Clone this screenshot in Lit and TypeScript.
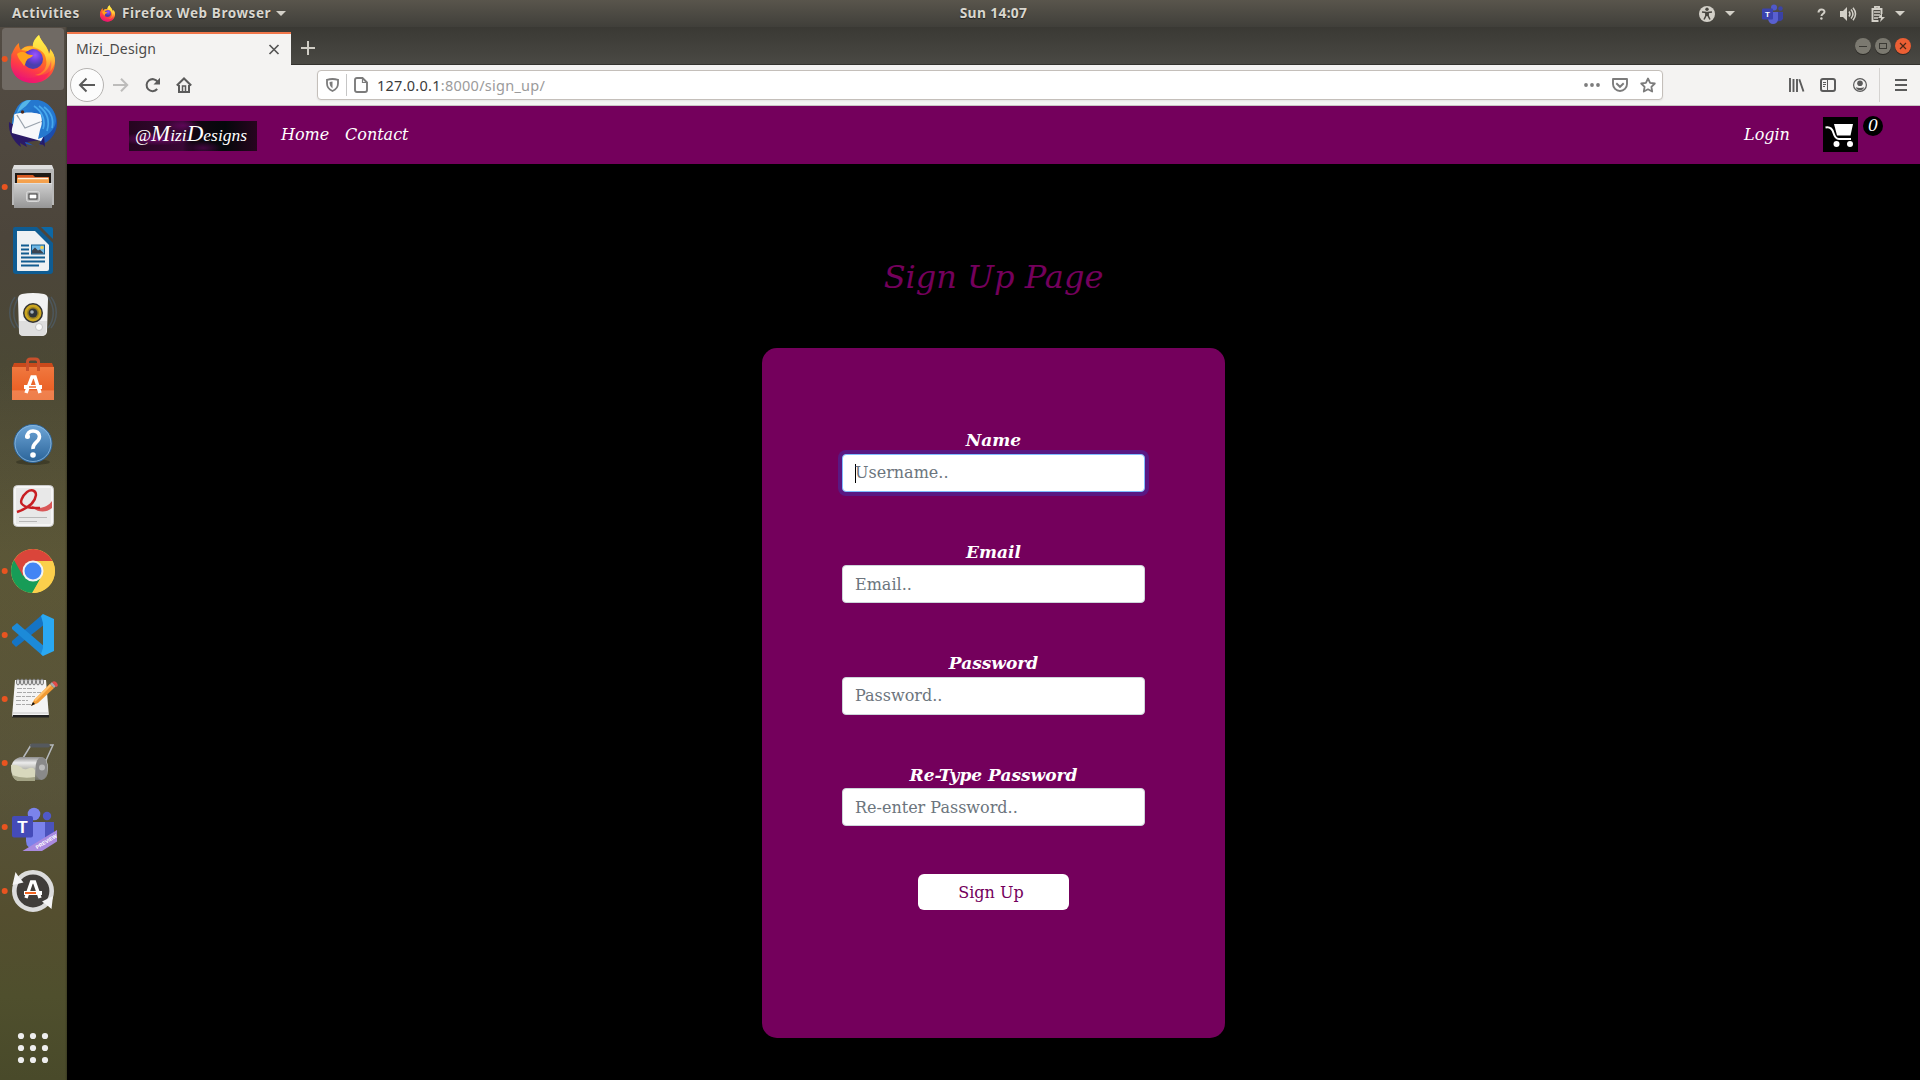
import { LitElement, html, svg, css } from "lit";
import { customElement } from "lit/decorators.js";

/** An inline icon whose viewBox starts at (x, y). */
const icon = (x: number, y: number, w: number, h: number, body: unknown, cls = "") =>
  html`<svg class="ic ${cls}" width=${w} height=${h} viewBox="${x} ${y} ${w} ${h}" aria-hidden="true">${body}</svg>`;

const fox = svg`
  <path d="M39 8c-4 4-6 7-6 11-4-1-9 0-12 4-2-2-2-5-2-7-4 3-7 9-8 15 0-2-0-3 1-5C11 32 10 38 12 43c3 8 11 13 21 13 13 0 22-9 22-21 0-5-2-10-5-13 0 2 0 3-1 5-1-8-8-12-10-19z" fill="url(#fxA)"/>
  <path d="M39 8c-5 4-7 9-6 13 6 0 12 4 13 11 2 8-3 15-11 16 10 2 19-4 20-14 0-5-2-9-5-12 0 2 0 3-1 5-1-8-8-12-10-19z" fill="url(#fxB)"/>
  <circle cx="33" cy="32" r="10" fill="url(#fxC)"/>
  <path d="M17 27c3-3 7-2 9-1 2 2 5 2 7 2-1 3-5 3-6 5-2 2-1 4-3 6-2-4-6-7-7-12z" fill="#ffa21c"/>
  <path d="M21 23c4-5 13-4 17-1-4-1-8 0-10 2z" fill="#ffb62a"/>
  <path d="M12 43c6 9 17 10 26 6 8-3 12-9 13-16 2 12-6 23-18 23-10 0-18-5-21-13z" fill="#f5146b" opacity=".4"/>`;

const foxDefs = svg`<defs>
  <linearGradient id="fxA" x1=".7" y1="0" x2=".3" y2="1"><stop offset="0" stop-color="#ffbd2e"/><stop offset=".4" stop-color="#ff7a1f"/><stop offset=".7" stop-color="#ff3b47"/><stop offset="1" stop-color="#e5107e"/></linearGradient>
  <linearGradient id="fxB" x1=".5" y1="0" x2=".5" y2="1"><stop offset="0" stop-color="#fff44f"/><stop offset=".5" stop-color="#ffd23a"/><stop offset="1" stop-color="#ff6a2b"/></linearGradient>
  <radialGradient id="fxC" cx=".6" cy=".3"><stop offset="0" stop-color="#9a55ff"/><stop offset=".6" stop-color="#6c3fd8"/><stop offset="1" stop-color="#4a3fae"/></radialGradient></defs>`;

const thunderbird = svg`<defs><linearGradient id="tb" x1="0" y1="0" x2="1" y2="1"><stop offset="0" stop-color="#2f96dd"/><stop offset=".5" stop-color="#1d63c4"/><stop offset="1" stop-color="#1b3f9e"/></linearGradient></defs>
  <g transform="translate(0 1)"><circle cx="34.500" cy="31" r="22.500" fill="url(#tb)"/>
  <path d="M9 30c-1 11 5 20 12 25l-1-4 7 4-2-5 20 3z" fill="#2b1a66"/>
  <path d="M27 50l14-2-3 8z" fill="#4f473b"/>
  <path d="M44 44l1 11-4-5z" fill="#241b6b"/>
  <path d="M14 22c1 9-3 13-2 19l29 8 6-11c-2-5-3-12-6-16L20 21z" fill="#f7f8fa"/>
  <path d="M17 23l8 13 18-7M25 36l3-2" fill="none" stroke="#9aa3ad" stroke-width="1.200"/>
  <path d="M31 8c-9-1-15 6-17 15 3-3 6-5 9-6 6-3 13-2 17 4 3 7 2 12 0 17l-2 9c10-3 17-9 18-18C56 18 47 8 36 8z" fill="#2578cf"/>
  <path d="M19 22c6-2 14-2 20 0 2 5 2 9 1 14l-4 10-20-6c-1-6 1-11 3-18z" fill="#f7f8fa"/>
  <path d="M17 23l8 13 15-6" fill="none" stroke="#9aa3ad" stroke-width="1.200"/>
  <path d="M44 15c7 5 10 12 8 21M39 14c8 6 11 15 8 25M34 14c8 5 12 15 9 23" fill="none" stroke="#47a8ec" stroke-width="1.700"/>
  <path d="M31 8c-7-1-12 5-14 13l9-7z" fill="#55b5e8"/><circle cx="22.500" cy="20" r="1.700" fill="#4b2a20"/></g>`;

const files = svg`<defs><linearGradient id="fl" x1="0" y1="0" x2="0" y2="1"><stop offset="0" stop-color="#cfcfcf"/><stop offset="1" stop-color="#969696"/></linearGradient></defs>
  <path d="M14 10h38l2 5v35H12V15z" fill="#dedede"/><path d="M12 14h42v36H12z" fill="#b9b9b9"/>
  <path d="M15 18h36v11H15z" fill="#1f1a16"/><path d="M17 20h16l2 2h14v7H17z" fill="#d85a22"/><path d="M17 23h32v5H17z" fill="#f4a14d"/><path d="M18 23.500h30" stroke="#fff3dc" stroke-width="1.500"/>
  <path d="M14 28h38v25H14z" fill="url(#fl)"/><path d="M14 28.500h38" stroke="#dedede"/>
  <rect x="26.500" y="36.500" width="13" height="10" rx="2" fill="#bbb" stroke="#d8d8d8"/><rect x="29" y="39" width="8" height="5" fill="#fff" stroke="#333"/>`;

const writer = svg`
  <path d="M15 8h22l16 16v28a3 3 0 0 1-3 3H16a3 3 0 0 1-3-3V10a2 2 0 0 1 2-2z" fill="#0f5c92"/>
  <path d="M41 8h10a2 2 0 0 1 2 2v10z" fill="#0c68a6"/>
  <path d="M17 12h18l14 14v24a2 2 0 0 1-2 2H18a1 1 0 0 1-1-1z" fill="#eef1f3"/>
  <path d="M21 26.500h8M21 30.500h8M21 34.500h8M21 38.500h24M21 42.500h24M21 46.500h18" stroke="#115c90" stroke-width="2"/>
  <rect x="31" y="25.500" width="14" height="10" fill="#115c90"/><rect x="32" y="26.500" width="12" height="8" fill="#6fb9e7"/><path d="M32 34.500v-3l3-3 3 3 2-1 4 4z" fill="#3c4450"/><circle cx="42" cy="28.500" r="1.700" fill="#f5cf4d"/>`;

const music = svg`
  <g fill="none" stroke="#506b88" stroke-width="1.500" opacity=".45"><path d="M15 14c-7 9-7 22 0 31M19 14c-7 10-7 22 0 31M51 14c7 9 7 22 0 31M48 14c7 10 7 22 0 31"/></g>
  <path d="M22 11q11-2 22 0 4 1 4 5l-1 33q-1 4-5 4H24q-5 0-5-4l-1-33q0-4 4-5z" fill="#f2f2f2"/><path d="M19 38h28l-1 11q-1 4-5 4H24q-5 0-5-4z" fill="#d6d6d6" opacity=".7"/>
  <circle cx="33" cy="30" r="10" fill="#333"/><circle cx="33" cy="30" r="8.500" fill="#caa520"/><circle cx="33" cy="30" r="6" fill="#9c8120"/><circle cx="33" cy="30" r="4.500" fill="#30343a"/><circle cx="32" cy="29" r="1.800" fill="#a7b3bd"/>
  <circle cx="39" cy="44" r="3.500" fill="#fafafa" stroke="#c4c4c4"/>`;

const software = svg`<defs><linearGradient id="sw" x1="0" y1="0" x2="0" y2="1"><stop offset="0" stop-color="#f0783f"/><stop offset=".7" stop-color="#ea6126"/><stop offset=".72" stop-color="#f0814f"/><stop offset="1" stop-color="#ee7e4a"/></linearGradient></defs>
  <g transform="translate(0 2)"><path d="M12 19l2-5h38l2 5z" fill="#c9491b"/><path d="M12 18h42v33H12z" fill="url(#sw)"/>
  <path d="M27.500 22v-9q0-3 3-3h5q3 0 3 3v9" fill="none" stroke="#c8502c" stroke-width="3"/>
  <path d="M26 44l6-16h3l5 16" fill="none" stroke="#fff" stroke-width="3.500"/><path d="M24 36h18v4H24z" fill="#fff"/><path d="M29 38h7" stroke="#ee6b30" stroke-width="1.500"/></g>`;

const help = svg`<defs><linearGradient id="hp" x1="0" y1="0" x2="0" y2="1"><stop offset="0" stop-color="#6ea6d8"/><stop offset="1" stop-color="#2a6398"/></linearGradient></defs>
  <ellipse cx="33" cy="51" rx="17" ry="3" fill="#2a2a1c" opacity=".5"/><circle cx="33" cy="32.500" r="19" fill="url(#hp)" stroke="#2d6499"/><circle cx="33" cy="32.500" r="18" fill="none" stroke="#8fbbe0" stroke-width=".8"/>
  <path d="M27 26.500c-1-8.500 12.500-8.500 12.500-1 0 6-7 5.500-6.500 12.500" fill="none" stroke="#fff" stroke-width="3.600"/><circle cx="27.500" cy="25.500" r="2.500" fill="#fff"/><circle cx="33" cy="44" r="2.800" fill="#fff"/>`;

const reader = svg`<g transform="translate(0 -1)">
  <rect x="13.500" y="11.500" width="40" height="41" rx="4" fill="#f5f5f5" stroke="#c9c9c9"/><rect x="16" y="14" width="35" height="36" fill="#e8e8e8"/>
  <path d="M31 31C38 36 47 34 52 27v7c-7 6-17 4-21-3z" fill="#d95757"/><path d="M17 38c12-4 18-10 19-17 0-5-5-6-9-3-5 4-8 11-4 13 3 3 9 3 17 3" fill="none" stroke="#c81e22" stroke-width="2.400"/>
  <path d="M19 43.500h28M19 47.500h18" stroke="#b8b8b8"/></g>`;

const chrome = svg`
  <circle cx="33" cy="32" r="22" fill="#f9cf45"/>
  <path d="M14 21a22 22 0 0 0 19 33l9-18-9-4z" fill="#179c57"/><path d="M14 21l9 16 10-15h19.600A22 22 0 0 0 14 21z" fill="#da453a"/><path d="M32 54l10-17 1-15h9.500A22 22 0 0 1 32 54z" fill="#fbcf4c"/>
  <circle cx="33" cy="32" r="10.500" fill="#f3f3f3"/><circle cx="33" cy="32" r="8.500" fill="#4285f4"/>`;

const code = svg`
  <path d="M43 11 12 38v2l4 4 29-23z" fill="#1574c4"/><path d="M12 24l5-4 28 24-2 9L12 26z" fill="#1c8ad8"/>
  <path d="M43 11l11 5v32l-11 5-2-2 2-6V20l-2-7z" fill="#2aa8f2"/>`;

const editor = svg`<g transform="translate(0 -1)">
  <path d="M15 14h31l3 37H12z" fill="#f4f4f4"/><path d="M13 49h36v2.500H12z" fill="#222"/><path d="M13 47h35" stroke="#c8c8c8"/>
  ${[18, 22, 26, 30, 34, 38, 42].map((x) => svg`<ellipse cx=${x} cy="16" rx="1.500" ry="3" fill="#e8e8e8" stroke="#777"/>`)}
  <path d="M17 22.500h18M17 26.500h24M16 30.500h20M16 34.500h12M16 38.500h15" stroke="#aaa" stroke-dasharray="5 1 3 1"/>
  <path d="M31 40l3-6 16-16 4 4-16 15z" fill="#f19a34"/><path d="M34 34l16-16 1.500 1.500-16 16z" fill="#ffc06a"/><path d="M50 18l2-2 4 4-2 2z" fill="#aaa"/><path d="M52 16q3-2 5 1t-1 4z" fill="#e34b4b"/><path d="M31 40l2-4 2 2z" fill="#111"/></g>`;

const roller = svg`<defs><linearGradient id="rl" x1="0" y1="0" x2="0" y2="1"><stop offset="0" stop-color="#8d8d8d"/><stop offset=".25" stop-color="#ececec"/><stop offset=".6" stop-color="#a8a8a0"/><stop offset="1" stop-color="#6c6c60"/></linearGradient></defs>
  <path d="M23 27l8-13h22l-10 22" fill="none" stroke="#b5b9bd" stroke-width="1.500"/><path d="M32 14.500h16" stroke="#55595e" stroke-width="4" stroke-linecap="round"/>
  <path d="M20 26h21q7 1 7 12t-7 11H19q-8-2-8-11t9-12z" fill="url(#rl)"/><path d="M11 34q4-1 10 2 2 3 6 2 6-3 8 1v11H18q-7-2-7-16z" fill="#d8d8bd"/><path d="M12 44q10 4 23 2v4H18q-4-1-6-6z" fill="#a3a385"/>
  <ellipse cx="41.500" cy="37.500" rx="6" ry="11.500" fill="#898989"/><circle cx="42" cy="36.500" r="3" fill="#bbb"/>`;

const teams = svg`<g transform="translate(0 5)">
  <circle cx="34" cy="14" r="6.300" fill="#7b83eb"/><circle cx="47" cy="16" r="4.200" fill="#5059c9"/><path d="M44 22h10v15a7 7 0 0 1-10 5z" fill="#4b53bc"/><path d="M26 22h19v19q-1 8-9 8-10 0-10-8z" fill="#7b83eb"/>
  <rect x="12" y="16" width="21" height="21.500" rx="2" fill="#444bb8"/><text x="22.500" y="32.500" class="teeT" text-anchor="middle">T</text>
  <path d="M22.500 51L57 30v11.500L42 51z" fill="#a98adf"/><text x="0" y="0" transform="translate(37 49.300) rotate(-31)" class="prev">PREVIEW</text></g>`;

const updater = svg`
  <circle cx="33" cy="32" r="17" fill="#403d3a"/><circle cx="33" cy="32" r="18.700" fill="none" stroke="#dcdcdc" stroke-width="4.600"/>
  <path d="M12.500 26l3-13 3 4.500 5 6z" fill="#f4f4f4"/><path d="M53 37l-1.500 13-3.500-3-6-4.500z" fill="#f4f4f4"/>
  <path d="M26 39l5.500-16h3L40 39" fill="none" stroke="#fff" stroke-width="3.400"/><path d="M24 32h18v4H24z" fill="#fff"/><path d="M25 34h11" stroke="#f26522" stroke-width="2"/>`;

const dock: { art: unknown; running: boolean; active?: boolean }[] = [
  { art: svg`${foxDefs}${fox}`, running: true, active: true },
  { art: thunderbird, running: false },
  { art: files, running: true },
  { art: writer, running: false },
  { art: music, running: false },
  { art: software, running: false },
  { art: help, running: false },
  { art: reader, running: false },
  { art: chrome, running: true },
  { art: code, running: true },
  { art: editor, running: true },
  { art: roller, running: true },
  { art: teams, running: true },
  { art: updater, running: true },
];

const caret = () => icon(0, 0, 10, 5, svg`<path d="M0 0h10L5 5z" fill="#d3d0c8"/>`);

@customElement("top-bar")
class TopBar extends LitElement {
  static styles = css`
    :host { display: grid; grid-template-columns: 1fr auto 1fr; align-items: center; height: 27px; background: linear-gradient(#59554c, #403f3a);
      font: 700 13.500px/24px "Noto Sans", "Open Sans", sans-serif; color: #d9d6ce; text-shadow: 0 1px 1px #222; white-space: nowrap; }
    svg { display: block; flex: none; overflow: visible; }
    .left { display: flex; align-items: center; padding-left: 12px; }
    .act { width: 87px; letter-spacing: 0.500px; padding-bottom: 1px; }
    .app { box-sizing: border-box; width: 160px; padding: 0 0 1px 6px; letter-spacing: 0.580px; }
    .clock { font-size: 13.800px; letter-spacing: 0.350px; padding: 0 0 1px 67px; }
    .right { display: flex; align-items: center; justify-content: flex-end; padding-right: 15px; }
    .g2 { margin-left: 27px; } .q { margin-left: 32px; } .g4 { margin-left: 15px; } .g5 { margin-left: 14px; } .g6 { margin-left: 10px; }
    .tt { font: 700 8px "Liberation Sans", sans-serif; fill: #fff; text-shadow: none; }
  `;
  render() {
    return html`
      <div class="left"><span class="act">Activities</span>
        <svg width="17" height="17" viewBox="10 7 46 50">${foxDefs}${fox}</svg>
        <span class="app">Firefox Web Browser</span>${caret()}</div>
      <div class="clock">Sun 14:07</div>
      <div class="right">
        ${icon(0, 0, 16, 16, svg`<circle cx="8" cy="8" r="8" fill="#d3d0c8"/><circle cx="8" cy="3.300" r="1.700" fill="#484640"/><path d="M3 6l4 .5V9.500L5 13.500M13 6l-4 .5V9.500l2 4" fill="none" stroke="#484640" stroke-width="1.500"/><path d="M6.300 6h3.400v4H6.300z" fill="#484640"/>`)}
        <span class="g6">${caret()}</span>
        <span class="g2">${icon(0, 0, 22, 20, svg`<circle cx="12" cy="3.500" r="3" fill="#5059c9"/><circle cx="18.500" cy="4.500" r="2.200" fill="#3d44a5"/><path d="M15 8h6v7q-2 3-6 2z" fill="#3a41a4"/><path d="M7 8h9v8q-1 4-5 4t-5-5z" fill="#5960d0"/><rect y="4.500" width="11" height="11" rx="1" fill="#3b43ae"/><text class="tt" x="3" y="13">T</text>`)}</span>
        ${icon(0, -2, 10, 13, svg`<path d="M2.500 3.500c0-4 6-4 6-.7 0 2-3 2-3 4.200" fill="none" stroke="#d3d0c8" stroke-width="2"/><circle cx="5.400" cy="9.500" r="1.200" fill="#d3d0c8"/>`, "q")}
        <span class="g5">${icon(0, 0, 16, 14, svg`<path d="M0 4h3l4-4v14L3 10H0z" fill="#d3d0c8"/><path d="M9 4.500q2 2.500 0 5M11 2.500q4 4.500 0 9M13 .8q5 6.200 0 12.500" fill="none" stroke="#d3d0c8" stroke-width="1.500"/>`)}</span>
        <span class="g4">${icon(0, 0, 14, 16, svg`<path d="M10.500 8V3h-9v12h6M4 3V.900h4V3" fill="none" stroke="#d3d0c8" stroke-width="1.900"/><path d="M3 6h6M3 9h6M3 12h4" stroke="#d3d0c8" stroke-width="1.400"/><path d="M11 7L7 12h3l-1 4 5-5h-3z" fill="#d3d0c8"/>`)}</span>
        <span class="g6">${caret()}</span>
      </div>`;
  }
}

@customElement("app-dock")
class AppDock extends LitElement {
  static styles = css`
    :host { display: flex; flex-direction: column; justify-content: space-between; width: 67px;
      background: linear-gradient(90deg, transparent 65px, rgba(30, 30, 15, 0.35)), linear-gradient(165deg, transparent 0 30%, rgba(110, 90, 30, 0.12) 55%, transparent 75%), linear-gradient(#534c44 0, #4c453b 20%, #4b4835 32%, #59563a 50%, #57533a 72%, #544e2f 84%, #4f4f2d 92%, #494a2a); }
    .cell { display: block; height: 64px; }
    svg { display: block; overflow: hidden; }
    .teeT { font: 700 17px "Liberation Sans", sans-serif; fill: #fff; }
    .prev { font: 700 5.200px "Liberation Sans", sans-serif; fill: #fff; }
  `;
  render() {
    return html`<div>${dock.map((d) => html`<div class="cell"><svg width="66" height="64" viewBox="0 0 66 64">
      ${d.active ? svg`<rect x="2" y="1" width="62" height="62" rx="3.500" fill="#76706a" opacity=".85"/>` : null}
      ${d.running ? svg`<circle cx="4.700" cy="32" r="3" fill="#e95420"/>` : null}${d.art}</svg></div>`)}</div>
      <svg width="66" height="64" viewBox="0 0 66 64">${[20, 32, 44].map((y) => [21, 33, 45].map((x) => svg`<circle cx=${x} cy=${y} r="3.100" fill="#eee"/>`))}</svg>`;
  }
}

@customElement("browser-chrome")
class BrowserChrome extends LitElement {
  static styles = css`
    :host { display: block; font-family: "Noto Sans", "Open Sans", sans-serif; white-space: nowrap; }
    svg { display: block; flex: none; overflow: visible; }
    .strip { display: flex; height: 38px; box-sizing: border-box; padding-top: 5px; background: linear-gradient(#3a3934, #4a4944); box-shadow: inset 0 -1px #33322e; }
    .tab { display: flex; align-items: center; justify-content: space-between; width: 224px; height: 33px; box-sizing: border-box; border-top: 2px solid #f0764a; padding: 0 12px 2px 9px; background: #f4f3f2; font-size: 14px; letter-spacing: 0.150px; color: #4b4a49; }
    .plus { margin: 9px 0 0 10px; }
    .win { display: flex; gap: 4px; margin: 6px 9px 0 auto; }
    .tools { display: flex; align-items: center; height: 41px; box-sizing: border-box; padding: 0 13px 1px 3px; background: #f4f3f2; border-bottom: 1px solid #c9c4c4; }
    .url { display: flex; align-items: center; width: 1346px; height: 30px; box-sizing: border-box; margin-left: 125px; padding: 0 6px 0 8px; border: 1px solid #c4bfba; border-radius: 4px; background: #fff; box-shadow: 0 1px 2px #0001; }
    .sep { width: 1px; height: 22px; margin: 0 8px 0 7px; background: #c6c6c6; }
    .addr { margin-left: 8px; flex: 1; font-size: 14.500px; line-height: 20px; color: #9b9b9b; letter-spacing: 0.260px; }
    .host { color: #3b3b3b; }
    .fwd { margin-left: 9px; } .rel { margin-left: 17px; } .home { margin-left: 15px; }
    .pocket { margin-left: 12px; } .star { margin-left: 12px; }
    .lib { margin-left: 126px; } .side { margin-left: 16px; } .acct { margin-left: 17px; }
    .bar { width: 1px; height: 34px; background: #d5d3d1; margin: 0 15px 0 12px; }
  `;
  render() {
    const wb = (c1: string, body: unknown) => icon(0, 0, 16, 17, svg`<circle cx="8" cy="9" r="8" fill="#292824"/><circle cx="8" cy="8" r="8" fill=${c1}/>${body}`);
    return html`
      <div class="strip">
        <div class="tab"><span>Mizi_Design</span>${icon(0, -1, 10, 10, svg`<path d="M.5 0l9 9M9.500 0l-9 9" stroke="#555" stroke-width="1.700"/>`)}</div>
        ${icon(0, 0, 14, 14, svg`<path d="M7 0v14M0 7h14" stroke="#d0cdc5" stroke-width="2"/>`, "plus")}
        <div class="win">
          ${wb("#7b7970", svg`<path d="M4 8.500h8" stroke="#3a3934"/>`)}
          ${wb("#7b7970", svg`<rect x="4.500" y="5.500" width="7" height="5" fill="none" stroke="#3a3934"/>`)}
          ${wb("#ec5f34", svg`<path d="M5 5l6 6M11 5l-6 6" stroke="#4a2818" stroke-width="1.200"/>`)}
        </div>
      </div>
      <div class="tools">
        ${icon(0, 0, 34, 34, svg`<circle cx="17" cy="17" r="16.500" fill="#fcfcfc" stroke="#b5b3b1"/><path d="M25 17H10.500M16.500 10.500L10 17l6.500 6.500" fill="none" stroke="#5b5b5b" stroke-width="2"/>`)}
        ${icon(0, 0, 15, 14, svg`<path d="M0 7h14M8 .8L14.200 7 8 13.200" fill="none" stroke="#bdbcbb" stroke-width="2"/>`, "fwd")}
        ${icon(0, 0, 16, 16, svg`<path d="M12.200 12A6 6 0 1 1 12.600 4.800" fill="none" stroke="#5b5b5b" stroke-width="2"/><path d="M15 .8V7.500H8.500z" fill="#5b5b5b"/>`, "rel")}
        ${icon(0, 0, 16, 16, svg`<path d="M.8 8.500L8 1.500l7.200 7M3 8v7h10V8" fill="none" stroke="#5b5b5b" stroke-width="2"/><path d="M6.500 14V9h3v5" fill="none" stroke="#5b5b5b" stroke-width="1.500"/>`, "home")}
        <div class="url">
          ${icon(0, 0, 13, 14, svg`<path d="M1 1.800Q6.500.2 12 1.800V5.500Q12 10.500 6.500 13 1 10.500 1 5.500z" fill="none" stroke="#7c7c7c" stroke-width="1.800"/><path d="M6.500 3.500v7Q3.600 8.500 3.600 5.500V4z" fill="#7c7c7c"/>`)}
          <div class="sep"></div>
          ${icon(1, 0, 14, 16, svg`<path d="M3 1h5.500L13 5.500V13q0 2-2 2H3q-2 0-2-2V3q0-2 2-2z" fill="none" stroke="#7c7c7c" stroke-width="1.900"/><path d="M8.500 1v4.500H13" fill="none" stroke="#7c7c7c" stroke-width="1.200"/>`)}
          <span class="addr"><span class="host">127.0.0.1</span>:8000/sign_up/</span>
          ${icon(0, 0, 16, 4, svg`<circle cx="2" cy="2" r="1.900" fill="#7c7c7c"/><circle cx="8" cy="2" r="1.900" fill="#7c7c7c"/><circle cx="14" cy="2" r="1.900" fill="#7c7c7c"/>`)}
          ${icon(0, 0, 16, 14, svg`<path d="M1 1h14v5a7 7 0 0 1-14 0z" fill="none" stroke="#7c7c7c" stroke-width="1.900" stroke-linejoin="round"/><path d="M4.300 5.200L8 8.800l3.700-3.600" fill="none" stroke="#7c7c7c" stroke-width="1.900"/>`, "pocket")}
          ${icon(0, 0, 16, 16, svg`<path d="M8 1.500l2.100 4.300 4.700.7-3.400 3.300.8 4.700L8 12.300l-4.200 2.200.8-4.700L1.200 6.500l4.700-.7z" fill="none" stroke="#7c7c7c" stroke-width="1.800" stroke-linejoin="round"/>`, "star")}
        </div>
        ${icon(0, 0, 15, 14, svg`<path d="M1 0v14M4.500 1v13M8 1v13M10.300 1.200l4.200 12.300" stroke="#5b5b5b" stroke-width="1.900"/>`, "lib")}
        ${icon(0, 0, 16, 14, svg`<rect x="1" y="1" width="14" height="12" rx="2" fill="none" stroke="#5b5b5b" stroke-width="2"/><path d="M7.500 1v12M3 4.500h3M3 6.500h3M3 8.500h2" stroke="#5b5b5b"/>`, "side")}
        ${icon(0, 0, 14, 14, svg`<circle cx="7" cy="7" r="6.400" fill="none" stroke="#5b5b5b" stroke-width="1.200"/><circle cx="7" cy="5.200" r="2.800" fill="#5b5b5b"/><path d="M2.800 9.300q4.200 1.200 8.400 0-1 3-4.200 3t-4.200-3z" fill="#5b5b5b"/>`, "acct")}
        <div class="bar"></div>
        ${icon(0, 0, 12, 12, svg`<path d="M0 1h12M0 6h12M0 11h12" stroke="#5b5b5b" stroke-width="2"/>`)}
      </div>`;
  }
}

const fields = [
  { label: "Name", hint: "Username..", focused: true },
  { label: "Email", hint: "Email..", focused: false },
  { label: "Password", hint: "Password..", focused: false },
  { label: "Re-Type Password", hint: "Re-enter Password..", focused: false },
];

@customElement("sign-up-page")
class SignUpPage extends LitElement {
  static styles = css`
    :host { display: flex; flex-direction: column; flex: 1; background: #000; font: 16px/24px "DejaVu Serif", serif; color: #fff; white-space: nowrap; }
    .nav { display: flex; align-items: center; height: 58px; box-sizing: border-box; padding: 0 37px 0 62px; background: #74005c; font-style: italic; }
    .logo { width: 128px; height: 30px; box-sizing: border-box; margin-bottom: -1px; padding: 0 4px 3px 0; display: flex; align-items: center; justify-content: center; font: italic 17.500px/24px "Z003", "URW Chancery L", "Liberation Serif", serif; color: #fff; overflow: hidden;
      background: radial-gradient(ellipse at 20% 60%, #6d0a68, transparent 26%), radial-gradient(ellipse at 42% 15%, #5c0656, transparent 18%), radial-gradient(ellipse at 58% 90%, #430640, transparent 18%), linear-gradient(90deg, #25051f, #3a0736 42%, #120612 50%, #04080b 75%, #28041f); }
    .cap { font-size: 23px; }
    .home { margin-left: 24px; width: 64px; }
    .contact { flex: 1; }
    .login { width: 79px; }
    svg { display: block; margin-bottom: 2px; }
    .count { width: 20px; height: 20px; margin: 0 0 18px 5px; border-radius: 50%; background: #000; text-align: center; line-height: 19px; }
    .title { margin: 93px 0 0; font: italic 400 32px/40px "DejaVu Serif", serif; color: #74005c; text-align: center; }
    .card { display: flex; flex-direction: column; align-items: center; width: 463px; height: 690px; box-sizing: border-box; margin: 51px auto 0; padding-top: 79.900px; border-radius: 15px; background: #74005c; }
    .field { display: flex; flex-direction: column; align-items: center; height: 111.500px; }
    .label { height: 25.600px; padding-top: 0.400px; font-weight: 700; font-style: italic; font-size: 17px; }
    .box { display: flex; align-items: center; width: 303px; height: 38px; box-sizing: border-box; padding: 0.800px 12px 0; border: 1px solid #ced4da; border-radius: 4px; background: #fff; color: #6c757d; }
    .box.focused { border-color: #80bdff; box-shadow: 0 0 0 4px rgba(50, 60, 190, 0.400); }
    .caretline { width: 1px; height: 19px; margin-right: -1px; background: #000; }
    .btn { width: 151px; height: 36px; box-sizing: border-box; padding: 1px 5px 0 0; border: 0; border-radius: 6px; background: #fff; color: #74005c; font: 16px/35px "DejaVu Serif", serif; text-align: center; }
  `;
  render() {
    return html`
      <nav class="nav">
        <div class="logo"><span>@<span class="cap">M</span>izi<span class="cap">D</span>esigns</span></div>
        <span class="home">Home</span><span class="contact">Contact</span><span class="login">Login</span>
        <svg width="35" height="35" viewBox="0 0 35 35"><path d="M0 0h35v35H0z" fill="#000"/><path d="M11 7h19l-2.500 11.500H14z" fill="#fff"/><path d="M2.500 10.500c5-1 7 2 8 5.500 1.200 4 2.500 6 5.500 6h12" fill="none" stroke="#fff" stroke-width="2"/><circle cx="13.500" cy="27" r="3" fill="#fff"/><circle cx="27" cy="27" r="3" fill="#fff"/></svg>
        <span class="count">0</span>
      </nav>
      <h1 class="title">Sign Up Page</h1>
      <div class="card">
        ${fields.map((f) => html`<div class="field"><span class="label">${f.label}</span>
          <div class="box ${f.focused ? "focused" : ""}">${f.focused ? html`<i class="caretline"></i>` : null}<span>${f.hint}</span></div></div>`)}
        <button class="btn">Sign Up</button>
      </div>`;
  }
}

@customElement("app-root")
class AppRoot extends LitElement {
  static styles = css`
    :host { display: block; width: 1920px; height: 1080px; overflow: hidden; background: #000; }
    .desk { display: flex; height: 1053px; }
    .window { display: flex; flex-direction: column; flex: 1; min-width: 0; }
  `;
  render() {
    return html`<top-bar></top-bar><div class="desk"><app-dock></app-dock><div class="window"><browser-chrome></browser-chrome><sign-up-page></sign-up-page></div></div>`;
  }
}
